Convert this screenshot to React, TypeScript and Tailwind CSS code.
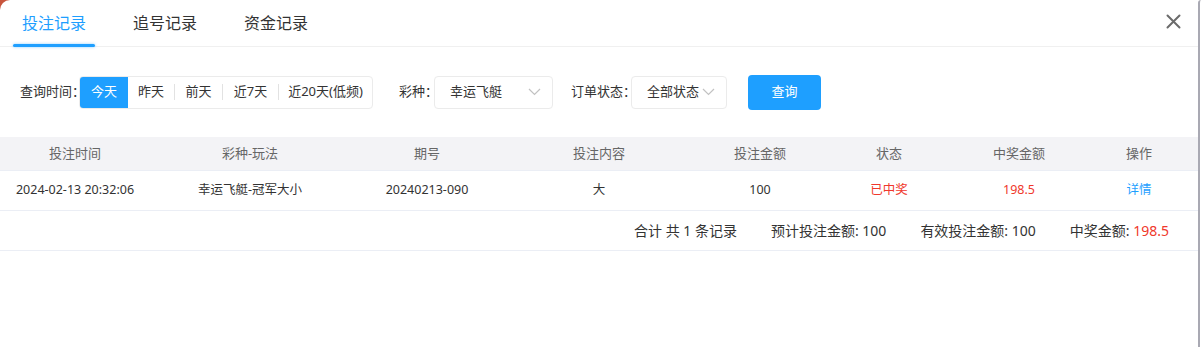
import React, { useState } from "react";

const TABS = ["投注记录", "追号记录", "资金记录"];
const RANGES = [
  { label: "今天", w: "w-[48px]" },
  { label: "昨天", w: "w-[46px]" },
  { label: "前天", w: "w-[47px]" },
  { label: "近7天", w: "w-[55px]" },
  { label: "近20天(低频)", w: "w-[93px]" },
];

const COLS = ["投注时间", "彩种-玩法", "期号", "投注内容", "投注金额", "状态", "中奖金额", "操作"];
const GRID = "grid grid-cols-[150px_200px_154px_190px_132px_126px_134px_106px]";

const Chevron = () => (
  <svg width="13" height="8" viewBox="0 0 13 8" fill="none" stroke="#c2c2c2" strokeWidth="1.2">
    <path d="M1 1l5.5 5.5L12 1" />
  </svg>
);

const Select = ({ value, w }: { value: string; w: string }) => (
  <div className={`${w} h-[33px] flex items-center justify-between pl-[15px] pr-[11px] border border-[#ebebeb] rounded-[4px] bg-white text-[13px] text-[#333]`}>
    <span>{value}</span>
    <Chevron />
  </div>
);

export default function App() {
  const [tab, setTab] = useState(0);
  const [range, setRange] = useState(0);

  return (
    <div
      className="relative w-[1201px] h-[347px] bg-white overflow-hidden"
      style={{ fontFamily: '"Noto Sans", "Noto Sans CJK SC", sans-serif' }}
    >
      {/* corner of the page behind the dialog */}
      <div className="absolute left-0 top-0 w-[10px] h-[10px] bg-[#c8553d]" />
      <div className="absolute right-0 top-0 w-[3px] h-[347px] border-l-2 border-[#a9a9b3] rounded-tl-[6px] bg-white" />

      <div className="relative w-[1198px] h-[347px] bg-white rounded-tl-[10px]">
        {/* tabs */}
        <div className="relative h-[47px] border-b border-[#f0f0f0] flex items-start pl-[13px]">
          {TABS.map((t, i) => (
            <button
              key={t}
              onClick={() => setTab(i)}
              className={`relative h-[46px] px-[9px] mr-[29px] text-[16px] leading-[44px] ${
                tab === i ? "text-[#1e9fff]" : "text-[#333]"
              }`}
            >
              {t}
              {tab === i && (
                <span className="absolute left-0 right-0 bottom-[-1px] h-[3px] rounded-full bg-[#1e9fff] shadow-[0_0_3px_rgba(30,159,255,0.5)]" />
              )}
            </button>
          ))}
          <button className="absolute right-[17px] top-[14px] w-[15px] h-[15px]">
            <svg width="15" height="15" viewBox="0 0 15 15" stroke="#6b6b6b" strokeWidth="2" strokeLinecap="round">
              <path d="M1.5 1.5l12 12M13.5 1.5l-12 12" />
            </svg>
          </button>
        </div>

        {/* filters */}
        <div className="flex items-center h-[90px] pl-[20px] text-[13px] text-[#333]">
          <span className="w-[59px] whitespace-nowrap">查询时间：</span>
          <div className="flex items-center h-[33px] border border-[#ebebeb] rounded-[4px] overflow-hidden">
            {RANGES.map((r, i) => (
              <div key={r.label} className="flex items-center h-full">
                {i > 1 && <span className="w-px h-[16px] bg-[#e2e2e2]" />}
                <button
                  onClick={() => setRange(i)}
                  className={`h-full ${r.w} whitespace-nowrap ${range === i ? "bg-[#1e9fff] text-white" : "text-[#333]"}`}
                >
                  {r.label}
                </button>
              </div>
            ))}
          </div>

          <span className="ml-[26px] w-[35px] whitespace-nowrap">彩种：</span>
          <Select value="幸运飞艇" w="w-[119px]" />

          <span className="ml-[18px] w-[60px] whitespace-nowrap">订单状态：</span>
          <Select value="全部状态" w="w-[96px]" />

          <button className="ml-[21px] w-[73px] h-[35px] rounded-[4px] bg-[#1e9fff] text-white text-[13px]">查询</button>
        </div>

        {/* table */}
        <div className="text-[13px]">
          <div className={`${GRID} h-[34px] items-center bg-[#f3f3f6] border-b border-[#ebeef5] text-[#666]`}>
            {COLS.map((c) => (
              <div key={c} className="text-center">
                {c}
              </div>
            ))}
          </div>
          <div className={`${GRID} h-[40px] items-center border-b border-[#ebeef5] text-[#333] text-[12.5px]`}>
            <div className="text-center">2024-02-13 20:32:06</div>
            <div className="text-center">幸运飞艇-冠军大小</div>
            <div className="text-center">20240213-090</div>
            <div className="text-center">大</div>
            <div className="text-center">100</div>
            <div className="text-center text-[#f0382c]">已中奖</div>
            <div className="text-center text-[#f0382c]">198.5</div>
            <div className="text-center text-[#1e9fff] cursor-pointer">详情</div>
          </div>
          <div className="flex items-center justify-end gap-[34px] h-[40px] pr-[29px] border-b border-[#ebeef5] text-[14px] text-[#333]">
            <span>合计 共 1 条记录</span>
            <span>预计投注金额: 100</span>
            <span>有效投注金额: 100</span>
            <span>
              中奖金额: <span className="text-[#f0382c]">198.5</span>
            </span>
          </div>
        </div>
      </div>
    </div>
  );
}
